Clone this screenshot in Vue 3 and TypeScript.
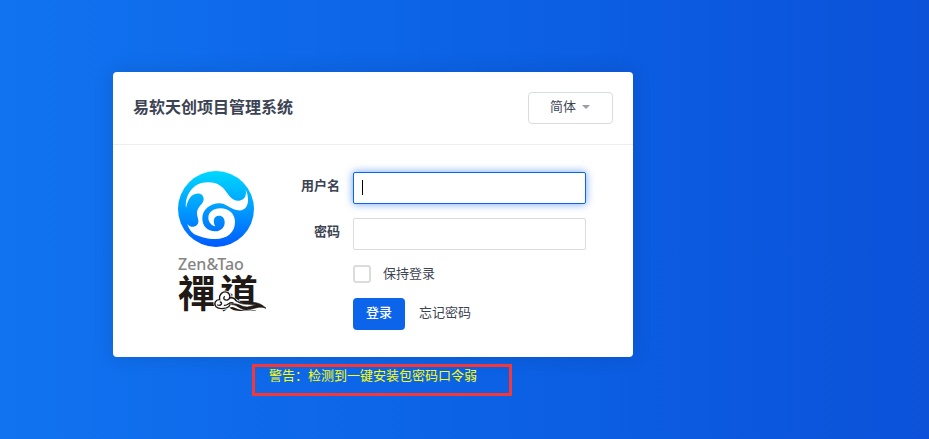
<script setup lang="ts">
import { onMounted, ref } from 'vue'

const language = ref('zh-cn')
const account = ref('')
const password = ref('')
const keepLogin = ref(false)
const accountFocused = ref(false)
const accountInput = ref<HTMLInputElement | null>(null)

onMounted(() => accountInput.value?.focus())
</script>

<template>
  <main class="page">
    <section class="card">
      <header class="card-header">
        <h1>易软天创项目管理系统</h1>
        <div class="language">
          <select v-model="language" aria-label="语言">
            <option value="zh-cn">简体</option>
          </select>
          <svg class="arrow" viewBox="0 0 8 4" aria-hidden="true"><path d="M0 0h8L4 4z" /></svg>
        </div>
      </header>

      <div class="card-body">
        <div class="brand">
          <svg class="emblem" viewBox="18 18 228 228" aria-hidden="true">
            <defs>
              <linearGradient id="emblem-fill" x1="0" y1="0" x2="0" y2="1">
                <stop offset="0" stop-color="#00d8ff" />
                <stop offset="0.5" stop-color="#009cff" />
                <stop offset="1" stop-color="#005aff" />
              </linearGradient>
            </defs>
            <circle cx="132" cy="132" r="114" fill="url(#emblem-fill)" />
            <path
              fill="#fff"
              d="M42 129 C38 94 60 52 108 52 C139 52 153 66 166 85 C177 101 188 109 201 107 C217 104 225 92 221 74 C230 92 231 115 222 127 C212 140 197 137 182 131 C167 125 158 115 143 115 C112 115 91 136 91 160 C91 184 107 199 129 199 C148 198 159 186 158 170 C157 158 150 151 140 152 C126 153 121 168 130 184 C118 181 109 171 109 158 C109 142 124 130 145 130 C171 130 189 147 189 171 C189 203 165 222 130 222 C103 222 90 216 72 210 C60 205 50 191 46 176 C54 187 66 188 74 181 C84 172 77 162 75 148 C73 125 95 119 95 103 C95 88 82 82 69 87 C51 94 46 112 42 129Z"
            />
          </svg>
          <span class="latin-name">Zen&amp;Tao</span>
          <div class="wordmark">
            <div class="han-name"><span>禪</span><span>道</span></div>
            <svg class="cloud" viewBox="0 0 162 72" aria-hidden="true">
              <path
                d="M9 55 C1 45 8 34 20 34 C19 16 32 7 44 14 C51 18 53 25 51 31 C63 28 68 38 82 46 C104 57 128 42 158 60 C132 56 108 72 78 60 C66 54 58 50 46 56 C34 65 19 65 9 55Z"
                fill="#fff" stroke="#fff" stroke-width="8"
              />
              <path
                d="M51 50 C46 62 20 66 9 56 C1 47 8 34 20 35 C17 17 32 8 43 13 C53 18 53 33 43 36 C35 38 29 31 34 26 M51 30 C60 27 66 32 70 39 M14 51 C24 55 30 44 22 42 M34 52 C46 53 47 41 60 45"
                fill="none" stroke="#211916" stroke-width="4" stroke-linecap="round"
              />
              <path d="M65 34 C82 50 109 41 128 44 C141 46 151 53 159 61 C137 51 122 65 101 66 C80 66 75 50 55 49 C75 43 84 58 104 57 C114 56 121 51 130 50 C105 48 80 53 65 34Z" fill="#211916" stroke="#211916" stroke-width="2" />
            </svg>
          </div>
        </div>

        <form class="login" @submit.prevent>
          <label class="field-label" for="account">用户名</label>
          <div class="input-wrap">
            <input
              id="account" ref="accountInput" v-model="account" class="text-input" type="text"
              @focus="accountFocused = true" @blur="accountFocused = false"
            />
            <span v-if="accountFocused && !account" class="caret" aria-hidden="true"></span>
          </div>

          <label class="field-label" for="password">密码</label>
          <input id="password" v-model="password" class="text-input" type="password" />

          <label class="keep">
            <input v-model="keepLogin" type="checkbox" />
            <span>保持登录</span>
          </label>

          <div class="actions">
            <button type="submit">登录</button>
            <a href="#">忘记密码</a>
          </div>
        </form>
      </div>
    </section>
    <p class="warning">警告：检测到一键安装包密码口令弱</p>
  </main>
</template>

<style>
body {
  margin: 0;
}
</style>

<style scoped>
* {
  box-sizing: border-box;
}

.page {
  min-height: 100vh;
  padding: 72px 24px 24px 113px;
  background: linear-gradient(90deg, #1173f0 0%, #0c62e5 50%, #0b52d9 100%);
  color: #3c4353;
  font: 13px/20px "Liberation Sans", "Noto Sans CJK SC", sans-serif;
}

.card {
  max-width: 520px;
  border-radius: 4px;
  background: #fff;
  box-shadow: 0 0 20px rgba(0, 0, 0, 0.12);
}

.card-header {
  display: flex;
  align-items: center;
  justify-content: space-between;
  padding: 20px;
  border-bottom: 1px solid #eee;
}

h1 {
  margin: 0;
  font-size: 16px;
  font-weight: 700;
  line-height: 24px;
}

.language {
  position: relative;
}

select {
  display: block;
  width: 85px;
  height: 32px;
  padding: 0 21px 2px;
  appearance: none;
  border: 1px solid #d8dbe5;
  border-radius: 4px;
  background: #fff;
  color: inherit;
  font: inherit;
}

.arrow {
  position: absolute;
  top: 13px;
  right: 23px;
  width: 8px;
  height: 4px;
  fill: #9a9ca6;
  pointer-events: none;
}

.card-body {
  display: flex;
  align-items: flex-start;
  padding: 26px 47px 27px 65px;
}

.brand {
  display: flex;
  flex: none;
  flex-direction: column;
  width: 88px;
}

.emblem {
  width: 76px;
  height: 76px;
}

.latin-name {
  margin-top: 7px;
  color: #858585;
  font: 500 16px/20px "Noto Sans", sans-serif;
}

.wordmark {
  position: relative;
  height: 37px;
}

.han-name {
  display: flex;
  gap: 4px;
  color: #211916;
  font: 700 38px/34px "Noto Sans CJK TC", sans-serif;
}

.cloud {
  position: absolute;
  right: -1px;
  bottom: -1px;
  width: 54px;
  height: 24px;
}

.login {
  display: grid;
  flex: 1;
  grid-template-columns: 74px 1fr;
  column-gap: 13px;
  row-gap: 14px;
  padding-top: 1px;
}

.field-label {
  padding-top: 4px;
  font-weight: 700;
  text-align: right;
}

.input-wrap {
  position: relative;
}

.text-input {
  display: block;
  width: 100%;
  height: 32px;
  padding: 5px 8px;
  border: 1px solid #dcdcdc;
  border-radius: 2px;
  outline: none;
  background: #fff;
  color: inherit;
  font: inherit;
}

.text-input:focus {
  border-color: #0c64eb;
  box-shadow: 0 0 8px rgba(12, 100, 235, 0.6);
}

.caret {
  position: absolute;
  top: 8px;
  left: 9px;
  width: 1px;
  height: 15px;
  background: #000;
  pointer-events: none;
}

.keep {
  display: flex;
  grid-column: 2;
  align-items: center;
  gap: 12px;
  height: 20px;
}

.keep input {
  width: 18px;
  height: 18px;
  margin: 0;
  appearance: none;
  border: 2px solid #dcdcdc;
  border-radius: 3px;
  background: #fff;
}

.keep input:checked {
  border-color: #0c64eb;
  background: #0c64eb;
}

.actions {
  display: flex;
  grid-column: 2;
  align-items: center;
  gap: 14px;
}

button {
  width: 52px;
  height: 32px;
  padding: 0 0 2px;
  border: 0;
  border-radius: 4px;
  background: #0c64eb;
  color: #fff;
  font: inherit;
  font-weight: 500;
}

a {
  padding-bottom: 2px;
  color: inherit;
  text-decoration: none;
}

.warning {
  width: 260px;
  height: 32px;
  margin: 7px 0 0 139px;
  padding: 0 14px;
  border: 3px solid #f73737;
  color: #ff0;
  line-height: 18px;
  white-space: nowrap;
}
</style>
